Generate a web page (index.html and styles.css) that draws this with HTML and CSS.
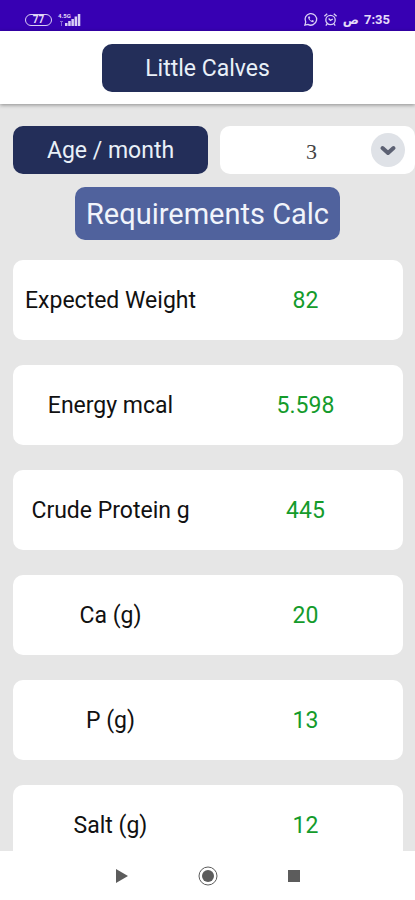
FILE: index.html
```html
<!DOCTYPE html>
<html lang="en">
<head>
<meta charset="utf-8">
<meta name="viewport" content="width=device-width, initial-scale=1">
<title>Little Calves</title>
<link rel="stylesheet" href="styles.css">
</head>
<body>
<div class="status">
  <div class="status-group">
    <span class="battery">77</span>
    <span class="network"><span class="network-type">4.5G</span>
      <svg class="signal" viewBox="0 0 24 14" aria-hidden="true"><path d="M8 13v-3h2.500v3zM11.200 13V8h2.500v5zM14.400 13V6h2.500v7zM17.600 13V3.500h2.500V13zM20.800 13V1h2.500v12z"/><path class="dim" d="M3 8h3v1H5v4H4V9H3z"/></svg>
    </span>
  </div>
  <div class="status-group">
    <svg class="status-icon" viewBox="0 0 16 16" aria-hidden="true"><path d="M2 14l.9-3.2A6.2 6.2 0 1 1 5.200 13.200z"/><path d="M5.500 5c-.5 2.500 3 6 5.500 5.800l.6-1.500-1.700-.8-.9.800C8 8.800 7.200 8 6.900 7.100l.8-.8L7 4.600z" class="fill"/></svg>
    <svg class="status-icon" viewBox="0 0 16 16" aria-hidden="true"><circle cx="8" cy="8.500" r="5"/><path d="M1.500 4.500l3-2.700M14.500 4.500l-3-2.700M4.500 12.500L3 14.500M11.500 12.500l1.500 2M6 7l2 2 2.500-1.500"/></svg>
    <span class="meridiem">ص</span>
    <span class="clock">7:35</span>
  </div>
</div>
<header class="header"><h1 class="title">Little Calves</h1></header>
<main class="main">
  <div class="age">
    <label class="age-label" for="age">Age / month</label>
    <div class="picker">
      <select id="age" class="age-select"><option>1</option><option>2</option><option selected>3</option><option>4</option></select>
      <svg class="arrow" viewBox="0 0 34 34" aria-hidden="true"><circle cx="17" cy="17" r="17"/><path d="M11.500 15l5.500 5 5.500-5"/></svg>
    </div>
  </div>
  <button class="calc" type="button">Requirements Calc</button>
  <dl class="cards">
    <div class="card"><dt>Expected Weight</dt><dd>82</dd></div>
    <div class="card"><dt>Energy mcal</dt><dd>5.598</dd></div>
    <div class="card"><dt>Crude Protein g</dt><dd>445</dd></div>
    <div class="card"><dt>Ca (g)</dt><dd>20</dd></div>
    <div class="card"><dt>P (g)</dt><dd>13</dd></div>
    <div class="card"><dt>Salt (g)</dt><dd>12</dd></div>
  </dl>
</main>
<nav class="nav" aria-label="System">
  <button class="nav-button" type="button" aria-label="Back"><svg viewBox="0 0 20 20"><path d="M4 3l12 7-12 7z"/></svg></button>
  <button class="nav-button" type="button" aria-label="Home"><svg viewBox="0 0 20 20"><circle class="ring" cx="10" cy="10" r="9"/><circle cx="10" cy="10" r="6"/></svg></button>
  <button class="nav-button" type="button" aria-label="Recent apps"><svg viewBox="0 0 20 20"><path d="M4 4h12v12H4z"/></svg></button>
</nav>
</body>
</html>
```
FILE: styles.css
```css
* {
  box-sizing: border-box;
}

body {
  display: flex;
  flex-direction: column;
  height: 100vh;
  margin: 0;
  background: #e6e6e6;
  color: #111;
  font-family: Roboto, sans-serif;
  font-size: 23px;
  line-height: 28px;
}

button,
select {
  border: 0;
  font-family: inherit;
}

.status {
  display: flex;
  flex: none;
  align-items: center;
  justify-content: space-between;
  height: 31px;
  padding: 8px 25px 0;
  background: #3700b3;
  color: #e4dcf8;
}

.status-group {
  display: flex;
  align-items: center;
  gap: 5px;
}

.battery {
  width: 27px;
  height: 12px;
  border: 1px solid #d9cff5;
  border-radius: 6px;
  font-size: 10px;
  font-weight: 700;
  line-height: 10px;
  text-align: center;
}

.network {
  position: relative;
  display: flex;
}

.network-type {
  position: absolute;
  top: 0;
  left: 1px;
  font-size: 6px;
  font-weight: 700;
  line-height: 6px;
}

.signal {
  width: 24px;
  height: 14px;
  fill: #d9cff5;
}

.signal .dim {
  opacity: 0.5;
}

.status-icon {
  width: 15px;
  height: 15px;
  fill: none;
  stroke: #d9cff5;
  stroke-width: 1.4;
}

.status-icon .fill {
  fill: #d9cff5;
  stroke: none;
}

.meridiem {
  font-family: "DejaVu Sans", sans-serif;
  font-size: 12px;
  font-weight: 700;
  line-height: 14px;
}

.clock {
  font-size: 13px;
  font-weight: 700;
  line-height: 14px;
}

.header {
  z-index: 1;
  display: flex;
  flex: none;
  justify-content: center;
  padding: 13px 0 12px;
  background: #fff;
  box-shadow: 0 1px 4px rgb(0 0 0 / 40%);
}

.title,
.age-label {
  margin: 0;
  padding: 11px 0 9px;
  border-radius: 10px;
  background: #232e59;
  color: #e9f0f8;
  font-size: 23px;
  font-weight: 400;
  line-height: 28px;
  text-align: center;
}

.title {
  width: 51%;
}

.main {
  display: flex;
  flex: 1;
  flex-direction: column;
  min-height: 0;
  padding-top: 22px;
  overflow-y: auto;
  scrollbar-width: none;
}

.age {
  display: grid;
  flex: none;
  grid-template-columns: 1fr 1fr;
  gap: 12px;
  padding-left: 13px;
}

.picker {
  position: relative;
  display: flex;
}

.age-select {
  width: 100%;
  padding: 2px 12px 0 0;
  border-radius: 10px;
  background: #fff;
  color: #444;
  font-family: "Liberation Serif", serif;
  font-size: 22px;
  text-align-last: center;
  appearance: none;
}

.arrow {
  position: absolute;
  top: 7px;
  right: 10px;
  width: 34px;
  height: 34px;
  fill: #dfe2e7;
  pointer-events: none;
}

.arrow path {
  fill: none;
  stroke: #5c6173;
  stroke-linecap: round;
  stroke-linejoin: round;
  stroke-width: 4;
}

.calc {
  flex: none;
  align-self: center;
  margin: 13px 0 20px;
  padding: 11px 11px 9px;
  border-radius: 10px;
  background: #50629d;
  color: #f1f4fb;
  font-size: 29px;
  line-height: 33px;
}

.cards {
  display: flex;
  flex-direction: column;
  gap: 25px;
  margin: 0;
  padding: 0 12px 0 13px;
}

.card {
  display: grid;
  flex: none;
  grid-template-columns: 1fr 1fr;
  align-items: center;
  height: 80px;
  padding-top: 2px;
  border-radius: 10px;
  background: #fff;
  text-align: center;
}

.card dd {
  margin: 0;
  color: #149b2b;
}

.nav {
  display: flex;
  flex: none;
  align-items: center;
  justify-content: center;
  gap: 66px;
  height: 49px;
  background: #fff;
}

.nav-button {
  display: flex;
  padding: 0;
  background: none;
}

.nav-button svg {
  width: 20px;
  height: 20px;
  fill: #5c5c5c;
}

.nav-button .ring {
  fill: none;
  stroke: #5c5c5c;
  stroke-width: 1;
}
```
